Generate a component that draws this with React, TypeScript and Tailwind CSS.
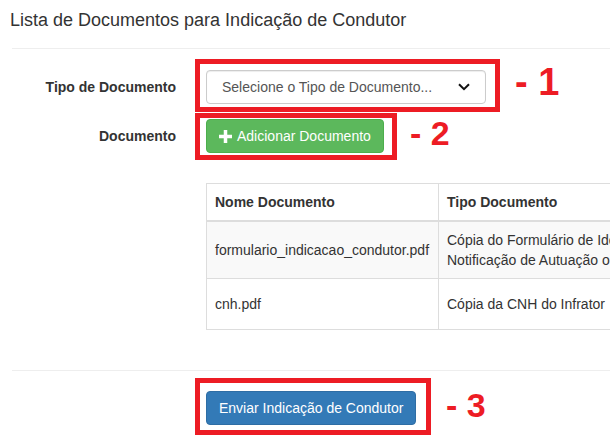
import React from "react";

export default function App() {
  return (
    <div className="relative w-[610px] h-[437px] overflow-hidden bg-white text-[14px] leading-[20px] text-[#333] font-['Liberation_Sans',Arial,sans-serif]">
      <div className="pt-[10px]">
        <h4 className="pl-[10px] text-[18px] leading-[20px] font-normal whitespace-nowrap">
          Lista de Documentos para Indicação de Condutor
        </h4>
        <div className="mt-[18px] ml-[12px] border-t border-[#eee]" />

        <div className="mt-[21px] flex flex-col">
          <div className="flex items-center">
            <label className="w-[191px] shrink-0 pr-[15px] text-right font-bold">
              Tipo de Documento
            </label>
            <div className="pl-[15px]">
              <div className="flex h-[34px] w-[280px] items-center justify-between rounded-[4px] border border-[#ccc] bg-white pl-[15px] pr-[15px] text-[#555] shadow-[inset_0_1px_1px_rgba(0,0,0,0.075)]">
                <span>Selecione o Tipo de Documento...</span>
                <svg width="12" height="8" viewBox="0 0 12 8" fill="none">
                  <polyline points="1,1.2 6,6.2 11,1.2" stroke="#111" strokeWidth="2" />
                </svg>
              </div>
            </div>
          </div>

          <div className="mt-[15px] flex items-center">
            <label className="w-[191px] shrink-0 pr-[15px] text-right font-bold">Documento</label>
            <div className="pl-[15px]">
              <button className="flex h-[34px] items-center gap-[5px] rounded-[4px] border border-[#4cae4c] bg-[#5cb85c] px-[12px] text-white">
                <svg width="13" height="13" viewBox="0 0 13 13" fill="#fff">
                  <rect x="4.75" y="0" width="3.5" height="13" />
                  <rect x="0" y="4.75" width="13" height="3.5" />
                </svg>
                <span>Adicionar Documento</span>
              </button>
            </div>
          </div>

          <div className="mt-[30px] flex">
            <div className="w-[191px] shrink-0" />
            <div className="pl-[15px]">
              <div className="w-[480px] border-t border-l border-[#ddd]">
                <div className="flex border-b-2 border-[#ddd] font-bold">
                  <div className="w-[232px] shrink-0 border-r border-[#ddd] p-[8px]">Nome Documento</div>
                  <div className="flex-1 p-[8px] whitespace-nowrap">Tipo Documento</div>
                </div>
                <div className="flex border-b border-[#ddd] bg-[#f9f9f9]">
                  <div className="flex w-[232px] shrink-0 items-center border-r border-[#ddd] p-[8px]">
                    formulario_indicacao_condutor.pdf
                  </div>
                  <div className="flex-1 p-[8px] whitespace-nowrap">
                    Cópia do Formulário de Identificação do Condutor Infrator da
                    <br />
                    Notificação de Autuação ou de Penalidade
                  </div>
                </div>
                <div className="flex h-[51px] border-b border-[#ddd]">
                  <div className="flex w-[232px] shrink-0 items-center border-r border-[#ddd] px-[8px]">
                    cnh.pdf
                  </div>
                  <div className="flex flex-1 items-center px-[8px] whitespace-nowrap">
                    Cópia da CNH do Infrator
                  </div>
                </div>
              </div>
            </div>
          </div>
        </div>

        <div className="mt-[40px] ml-[12px] border-t border-[#eee]" />

        <div className="mt-[20px] flex">
          <div className="w-[191px] shrink-0" />
          <div className="pl-[15px]">
            <button className="h-[34px] rounded-[4px] border border-[#2e6da4] bg-[#337ab7] px-[12px] text-white whitespace-nowrap">
              Enviar Indicação de Condutor
            </button>
          </div>
        </div>
      </div>

      {/* annotation overlays */}
      <div className="absolute left-[195px] top-[59px] h-[53px] w-[305px] border-[5px] border-[#ed1c24]" />
      <div className="absolute left-[195px] top-[113px] h-[47px] w-[202px] border-[5px] border-[#ed1c24]" />
      <div className="absolute left-[195px] top-[378px] h-[57px] w-[236px] border-[5px] border-[#ed1c24]" />

      <div className="absolute left-[515px] top-[63px] text-[38px] leading-[38px] font-bold text-[#ed1c24] whitespace-nowrap">
        - 1
      </div>
      <div className="absolute left-[410px] top-[116px] text-[34px] leading-[34px] font-bold text-[#ed1c24] whitespace-nowrap">
        - 2
      </div>
      <div className="absolute left-[446px] top-[388px] text-[34px] leading-[34px] font-bold text-[#ed1c24] whitespace-nowrap">
        - 3
      </div>
    </div>
  );
}
